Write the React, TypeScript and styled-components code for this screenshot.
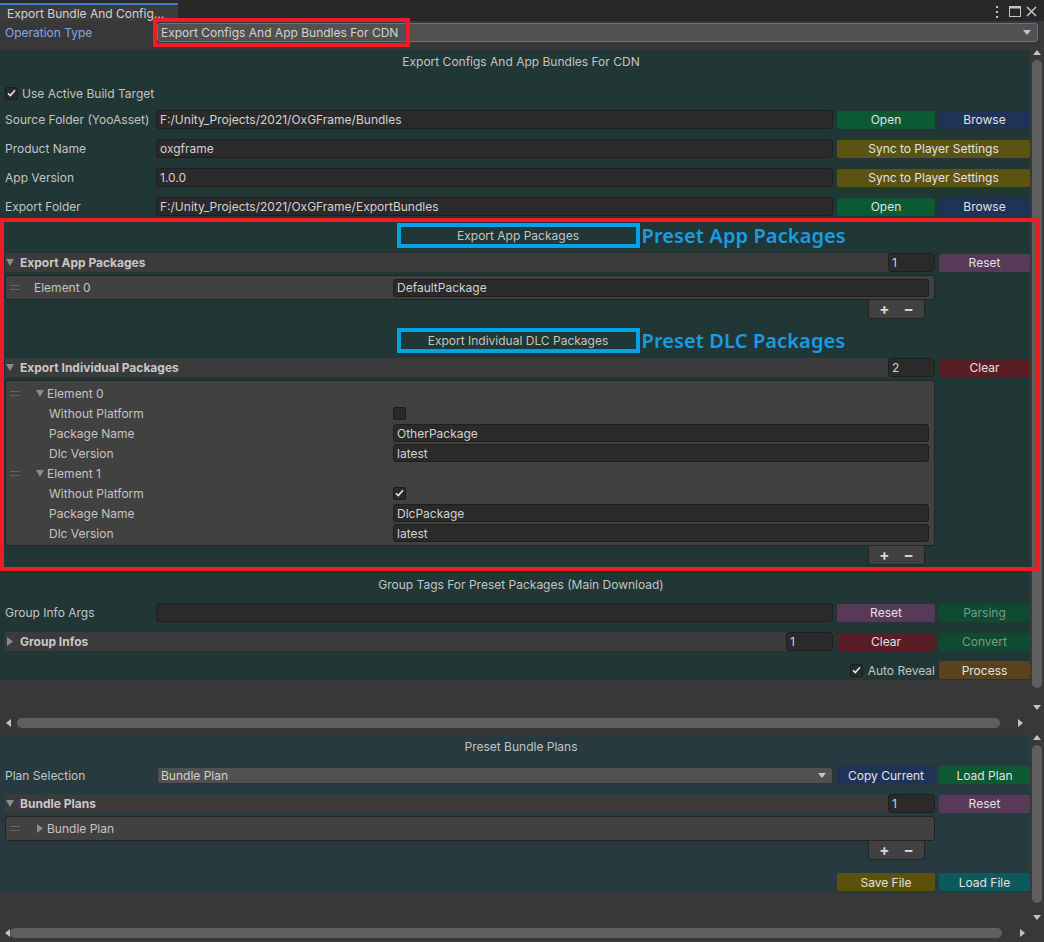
import React from "react";
import styled, { createGlobalStyle } from "styled-components";

const GlobalStyle = createGlobalStyle`
  html, body { margin: 0; padding: 0; background: #383838; }
  body { font-family: Inter, "Noto Sans", "Liberation Sans", sans-serif; font-size: 12px; color: #c4c4c4; }
  * { box-sizing: border-box; }
`;

const Window = styled.div`
  width: 1044px;
  height: 942px;
  display: flex;
  flex-direction: column;
  background: #383838;
  overflow: hidden;
`;

const TabBar = styled.div`
  height: 21px;
  flex-shrink: 0;
  background: #282828;
  display: flex;
  align-items: flex-end;
`;

const Tab = styled.div`
  width: 178px;
  height: 18px;
  background: #3c3c3c;
  border-top: 2px solid #3f7fd0;
  padding-left: 7px;
  display: flex;
  align-items: center;
  color: #d2d2d2;
  white-space: nowrap;
`;

const TabActions = styled.div`
  margin-left: auto;
  align-self: center;
  display: flex;
  align-items: center;
  padding-right: 7px;
  padding-top: 2px;
`;

const TabIcon = styled.span<{ $mr: number }>`
  display: inline-flex;
  line-height: 0;
  margin-right: ${(p) => p.$mr}px;
`;

const OpRow = styled.div`
  height: 22px;
  flex-shrink: 0;
  display: flex;
  align-items: center;
  padding: 0 6px 0 5px;
`;

const OpLabel = styled.div`
  width: 152px;
  color: #7ca8ee;
  flex-shrink: 0;
`;

const Dropdown = styled.div<{ $focus?: boolean; $h: number }>`
  position: relative;
  flex: 1;
  height: ${(p) => p.$h}px;
  background: #515151;
  border: 1px solid ${(p) => (p.$focus ? "#3b7ad0" : "#303030")};
  border-radius: 3px;
  display: flex;
  align-items: center;
  justify-content: space-between;
  padding: 0 6px 0 3px;
  color: #d2d2d2;
  white-space: nowrap;
`;

const RedMark = styled.div`
  position: absolute;
  left: -5px;
  top: -6px;
  width: 257px;
  height: 29px;
  border: 4px solid #ee1c25;
  pointer-events: none;
`;

const ScrollView = styled.div<{ $h: number }>`
  height: ${(p) => p.$h}px;
  flex-shrink: 0;
  display: flex;
  flex-direction: column;
`;

const ScrollBody = styled.div`
  flex: 1;
  display: flex;
  min-height: 0;
`;

const ScrollContent = styled.div<{ $pt: number }>`
  flex: 1;
  padding-top: ${(p) => p.$pt}px;
  display: flex;
  flex-direction: column;
`;

const VBar = styled.div<{ $thumbTop: number; $thumbBottom: number }>`
  width: 14px;
  flex-shrink: 0;
  display: flex;
  flex-direction: column;
  align-items: center;
  padding: ${(p) => p.$thumbTop}px 0 ${(p) => p.$thumbBottom}px;
  position: relative;
`;

const VThumb = styled.div`
  flex: 1;
  width: 10px;
  background: #5f5f5f;
  border-radius: 5px;
`;

const ArrowSlot = styled.div<{ $pos: "top" | "bottom" | "left" | "right"; $off: number }>`
  position: absolute;
  ${(p) => p.$pos}: ${(p) => p.$off}px;
  display: flex;
  line-height: 0;
`;

const HBar = styled.div<{ $l: number; $r: number }>`
  height: 14px;
  flex-shrink: 0;
  display: flex;
  align-items: center;
  padding: 0 ${(p) => p.$r}px 0 ${(p) => p.$l}px;
  position: relative;
`;

const HThumb = styled.div`
  flex: 1;
  height: 10px;
  background: #5f5f5f;
  border-radius: 5px;
`;

const Panel = styled.div<{ $bg: string; $pb: number }>`
  background: ${(p) => p.$bg};
  display: flex;
  flex-direction: column;
  padding-bottom: ${(p) => p.$pb}px;
`;

const SectionTitle = styled.div<{ $mt?: number }>`
  height: 22px;
  margin-top: ${(p) => p.$mt ?? 0}px;
  display: flex;
  align-items: center;
  justify-content: center;
  padding-left: 12px;
  color: #c4c4c4;
`;

const CheckRow = styled.div<{ $mt?: number }>`
  height: 18px;
  margin-top: ${(p) => p.$mt ?? 0}px;
  display: flex;
  align-items: center;
  gap: 4px;
  padding-left: 5px;
`;

const Box = styled.div`
  width: 13px;
  height: 13px;
  flex-shrink: 0;
  background: #2a2a2a;
  border: 1px solid #1c1c1c;
  border-radius: 2px;
  display: flex;
  align-items: center;
  justify-content: center;
`;

const FieldRow = styled.div<{ $mt?: number; $h?: number }>`
  height: ${(p) => p.$h ?? 19}px;
  margin-top: ${(p) => p.$mt ?? 0}px;
  display: flex;
  align-items: center;
  padding-left: 5px;
`;

const FieldLabel = styled.div<{ $w?: number }>`
  width: ${(p) => p.$w ?? 151}px;
  flex-shrink: 0;
  white-space: nowrap;
`;

const TextField = styled.div<{ $h?: number; $grow?: boolean }>`
  ${(p) => (p.$grow ? "flex: 1;" : "")}
  height: ${(p) => p.$h ?? 19}px;
  background: #2a2a2a;
  border: 1px solid #1f1f1f;
  border-radius: 3px;
  padding: 0 3px;
  display: flex;
  align-items: center;
  color: #d2d2d2;
  white-space: nowrap;
  overflow: hidden;
`;

const Btn = styled.div<{ $w: number; $bg: string; $dim?: boolean }>`
  width: ${(p) => p.$w}px;
  height: 18px;
  flex-shrink: 0;
  margin-left: 4px;
  background: ${(p) => p.$bg};
  border-radius: 2px;
  display: flex;
  align-items: center;
  justify-content: center;
  color: ${(p) => (p.$dim ? "#78998a" : "#e2e2e2")};
  white-space: nowrap;
`;

const Annotated = styled.div<{ $mt?: number }>`
  position: relative;
  margin-top: ${(p) => p.$mt ?? 0}px;
  padding: 5px 0 6px;
  display: flex;
  flex-direction: column;
`;

const RedFrame = styled.div`
  position: absolute;
  left: 0;
  top: 0;
  right: -9px;
  bottom: 0;
  border: 4px solid #ee1c25;
  pointer-events: none;
  z-index: 3;
`;

const BlueRow = styled.div<{ $mt?: number }>`
  margin-top: ${(p) => p.$mt ?? 0}px;
  display: flex;
  justify-content: center;
  padding-left: 6px;
`;

const BlueBox = styled.div`
  position: relative;
  width: 243px;
  height: 25px;
  border: 4px solid #00a2e8;
  display: flex;
  align-items: center;
  justify-content: center;
  color: #c4c4c4;
`;

const BlueNote = styled.div`
  position: absolute;
  left: calc(100% + 6px);
  top: 50%;
  transform: translateY(-52%);
  white-space: nowrap;
  color: #1a9be2;
  font-family: "Noto Sans", "Open Sans", sans-serif;
  font-weight: 600;
  font-size: 20px;
  letter-spacing: 0.1px;
`;

const HeaderRow = styled.div<{ $mt?: number }>`
  height: 19px;
  margin-top: ${(p) => p.$mt ?? 0}px;
  display: flex;
  align-items: center;
  padding-left: 5px;
`;

const HeaderBar = styled.div`
  flex: 1;
  height: 19px;
  background: #3b3b3b;
  display: flex;
  align-items: center;
  gap: 5px;
  font-weight: 700;
  color: #c8c8c8;
`;

const HeaderIcon = styled.span`
  display: inline-flex;
  width: 10px;
  justify-content: center;
  line-height: 0;
`;

const Count = styled(TextField)`
  margin-left: auto;
  width: 47px;
  font-weight: 400;
`;

const ListBox = styled.div<{ $mt?: number }>`
  margin: ${(p) => p.$mt ?? 0}px 0 0 5px;
  width: 930px;
  background: #414141;
  border: 1px solid #242424;
  border-radius: 3px;
  padding: 2px 0;
  display: flex;
  flex-direction: column;
`;

const ListRow = styled.div<{ $h: number }>`
  height: ${(p) => p.$h}px;
  display: grid;
  grid-template-columns: 387px 1fr;
  align-items: center;
  padding-right: 5px;
`;

const RowLead = styled.div<{ $pl: number }>`
  display: flex;
  align-items: center;
  padding-left: ${(p) => p.$pl}px;
  white-space: nowrap;
`;

const Handle = styled.div<{ $gap: number }>`
  width: 10px;
  height: 5px;
  border-top: 1px solid #646464;
  border-bottom: 1px solid #646464;
  margin-right: ${(p) => p.$gap}px;
`;

const Fold = styled.span`
  display: inline-flex;
  width: 8px;
  margin-right: 3px;
  justify-content: center;
`;

const FooterWrap = styled.div`
  width: 935px;
  display: flex;
  justify-content: flex-end;
  padding-right: 10px;
`;

const Footer = styled.div`
  width: 57px;
  height: 19px;
  background: #414141;
  border: 1px solid #242424;
  border-top: none;
  border-radius: 0 0 3px 3px;
  display: flex;
  align-items: center;
  justify-content: center;
  gap: 14px;
  font-size: 15px;
  font-weight: 700;
  color: #d8d8d8;
  padding-bottom: 1px;
`;

const ActionRow = styled.div<{ $mt?: number }>`
  height: 18px;
  margin-top: ${(p) => p.$mt ?? 0}px;
  display: flex;
  align-items: center;
  justify-content: flex-end;
`;

const InlineLabel = styled.span`
  margin-left: 5px;
  color: #c4c4c4;
`;

const Tri = ({ dir, c = "#c4c4c4" }: { dir: "up" | "down" | "left" | "right"; c?: string }) => {
  const d =
    dir === "up" ? "M0 5L4 0L8 5z" : dir === "down" ? "M0 0h8L4 5z" : dir === "left" ? "M5 0v8L0 4z" : "M0 0l5 4L0 8z";
  const vertical = dir === "up" || dir === "down";
  return (
    <svg width={vertical ? 8 : 5} height={vertical ? 5 : 8} viewBox={vertical ? "0 0 8 5" : "0 0 5 8"}>
      <path d={d} fill={c} />
    </svg>
  );
};

const FoldIcon = ({ open }: { open: boolean }) =>
  open ? (
    <svg width="8" height="7" viewBox="0 0 8 7">
      <path d="M0 0h8L4 7z" fill="#8c8c8c" />
    </svg>
  ) : (
    <svg width="6" height="9" viewBox="0 0 6 9">
      <path d="M0 0l6 4.5L0 9z" fill="#8c8c8c" />
    </svg>
  );

const Check = () => (
  <svg width="9" height="8" viewBox="0 0 9 8">
    <path d="M1 4.3l2.3 2.3L8 1.3" stroke="#e6e6e6" strokeWidth="1.6" fill="none" />
  </svg>
);

const CheckBox = ({ on }: { on: boolean }) => <Box>{on ? <Check /> : null}</Box>;

const Kebab = () => (
  <svg width="4" height="12" viewBox="0 0 4 12">
    <rect x="1" y="0" width="2" height="2" fill="#c4c4c4" />
    <rect x="1" y="5" width="2" height="2" fill="#c4c4c4" />
    <rect x="1" y="10" width="2" height="2" fill="#c4c4c4" />
  </svg>
);

const Maximize = () => (
  <svg width="12" height="11" viewBox="0 0 12 11">
    <rect x="0.5" y="0.5" width="11" height="10" fill="none" stroke="#c4c4c4" />
    <rect x="0.5" y="0.5" width="11" height="2" fill="#c4c4c4" />
  </svg>
);

const Close = () => (
  <svg width="11" height="11" viewBox="0 0 11 11">
    <path d="M1 1l9 9M10 1l-9 9" stroke="#c4c4c4" strokeWidth="1.5" />
  </svg>
);

const C = {
  green: "#0c5a33",
  navy: "#1f3358",
  olive: "#5b5312",
  purple: "#583958",
  red: "#591d25",
  dimGreen: "#0f4a31",
  brown: "#5a421f",
  save: "#5c510b",
  teal: "#0e595b",
};

const Field = ({ label, value, mt, children }: { label: string; value: string; mt?: number; children?: React.ReactNode }) => (
  <FieldRow $mt={mt}>
    <FieldLabel>{label}</FieldLabel>
    <TextField $grow>{value}</TextField>
    {children}
  </FieldRow>
);

const ListHeader = ({ title, count, open, mt, children }: { title: string; count: string; open: boolean; mt: number; children: React.ReactNode }) => (
  <HeaderRow $mt={mt}>
    <HeaderBar>
      <HeaderIcon>
        <FoldIcon open={open} />
      </HeaderIcon>
      <span>{title}</span>
      <Count>{count}</Count>
    </HeaderBar>
    {children}
  </HeaderRow>
);

const ElementRow = ({ gap, label, fold }: { gap: number; label: string; fold?: "open" | "closed" }) => (
  <ListRow $h={20}>
    <RowLead $pl={4}>
      <Handle $gap={gap} />
      {fold ? (
        <Fold>
          <FoldIcon open={fold === "open"} />
        </Fold>
      ) : null}
      {label}
    </RowLead>
    <div />
  </ListRow>
);

const SubRow = ({ label, children }: { label: string; children: React.ReactNode }) => (
  <ListRow $h={20}>
    <RowLead $pl={43}>{label}</RowLead>
    <div>{children}</div>
  </ListRow>
);

const PlusMinus = () => (
  <FooterWrap>
    <Footer>
      <span>+</span>
      <span>−</span>
    </Footer>
  </FooterWrap>
);

export default function App() {
  return (
    <>
      <GlobalStyle />
      <Window>
        <TabBar>
          <Tab>Export Bundle And Config...</Tab>
          <TabActions>
            <TabIcon $mr={10}>
              <Kebab />
            </TabIcon>
            <TabIcon $mr={5}>
              <Maximize />
            </TabIcon>
            <TabIcon $mr={0}>
              <Close />
            </TabIcon>
          </TabActions>
        </TabBar>

        <OpRow>
          <OpLabel>Operation Type</OpLabel>
          <Dropdown $focus $h={19}>
            <span>Export Configs And App Bundles For CDN</span>
            <Tri dir="down" />
            <RedMark />
          </Dropdown>
        </OpRow>

        <ScrollView $h={687}>
          <ScrollBody>
            <ScrollContent $pt={7}>
              <Panel $bg="#203735" $pb={1}>
                <SectionTitle>Export Configs And App Bundles For CDN</SectionTitle>
                <CheckRow $mt={12}>
                  <CheckBox on />
                  <span>Use Active Build Target</span>
                </CheckRow>
                <Field label="Source Folder (YooAsset)" value="F:/Unity_Projects/2021/OxGFrame/Bundles" mt={8}>
                  <Btn $w={98} $bg={C.green}>Open</Btn>
                  <Btn $w={91} $bg={C.navy}>Browse</Btn>
                </Field>
                <Field label="Product Name" value="oxgframe" mt={10}>
                  <Btn $w={193} $bg={C.olive}>Sync to Player Settings</Btn>
                </Field>
                <Field label="App Version" value="1.0.0" mt={10}>
                  <Btn $w={193} $bg={C.olive}>Sync to Player Settings</Btn>
                </Field>
                <Field label="Export Folder" value="F:/Unity_Projects/2021/OxGFrame/ExportBundles" mt={10}>
                  <Btn $w={98} $bg={C.green}>Open</Btn>
                  <Btn $w={91} $bg={C.navy}>Browse</Btn>
                </Field>

                <Annotated $mt={2}>
                  <RedFrame />
                  <BlueRow>
                    <BlueBox>
                      Export App Packages
                      <BlueNote>Preset App Packages</BlueNote>
                    </BlueBox>
                  </BlueRow>
                  <ListHeader title="Export App Packages" count="1" open mt={5}>
                    <Btn $w={91} $bg={C.purple}>Reset</Btn>
                  </ListHeader>
                  <ListBox $mt={3}>
                    <ListRow $h={19}>
                      <RowLead $pl={4}>
                        <Handle $gap={14} />
                        Element 0
                      </RowLead>
                      <TextField $h={18}>DefaultPackage</TextField>
                    </ListRow>
                  </ListBox>
                  <PlusMinus />

                  <BlueRow $mt={9}>
                    <BlueBox>
                      Export Individual DLC Packages
                      <BlueNote>Preset DLC Packages</BlueNote>
                    </BlueBox>
                  </BlueRow>
                  <ListHeader title="Export Individual Packages" count="2" open mt={5}>
                    <Btn $w={91} $bg={C.red}>Clear</Btn>
                  </ListHeader>
                  <ListBox $mt={3}>
                    <ElementRow gap={16} label="Element 0" fold="open" />
                    <SubRow label="Without Platform">
                      <CheckBox on={false} />
                    </SubRow>
                    <SubRow label="Package Name">
                      <TextField $h={18}>OtherPackage</TextField>
                    </SubRow>
                    <SubRow label="Dlc Version">
                      <TextField $h={18}>latest</TextField>
                    </SubRow>
                    <ElementRow gap={16} label="Element 1" fold="open" />
                    <SubRow label="Without Platform">
                      <CheckBox on />
                    </SubRow>
                    <SubRow label="Package Name">
                      <TextField $h={18}>DlcPackage</TextField>
                    </SubRow>
                    <SubRow label="Dlc Version">
                      <TextField $h={18}>latest</TextField>
                    </SubRow>
                  </ListBox>
                  <PlusMinus />
                </Annotated>

                <SectionTitle $mt={2}>Group Tags For Preset Packages (Main Download)</SectionTitle>
                <Field label="Group Info Args" value="" mt={8}>
                  <Btn $w={98} $bg={C.purple}>Reset</Btn>
                  <Btn $w={91} $bg={C.dimGreen} $dim>Parsing</Btn>
                </Field>
                <ListHeader title="Group Infos" count="1" open={false} mt={10}>
                  <Btn $w={98} $bg={C.red}>Clear</Btn>
                  <Btn $w={91} $bg={C.dimGreen} $dim>Convert</Btn>
                </ListHeader>
                <ActionRow $mt={10}>
                  <CheckBox on />
                  <InlineLabel>Auto Reveal</InlineLabel>
                  <Btn $w={91} $bg={C.brown}>Process</Btn>
                </ActionRow>
              </Panel>
            </ScrollContent>
            <VBar $thumbTop={17} $thumbBottom={28}>
              <ArrowSlot $pos="top" $off={7}>
                <Tri dir="up" />
              </ArrowSlot>
              <VThumb />
              <ArrowSlot $pos="bottom" $off={6}>
                <Tri dir="down" />
              </ArrowSlot>
            </VBar>
          </ScrollBody>
          <HBar $l={17} $r={44}>
            <ArrowSlot $pos="left" $off={6}>
              <Tri dir="left" />
            </ArrowSlot>
            <HThumb />
            <ArrowSlot $pos="right" $off={21}>
              <Tri dir="right" />
            </ArrowSlot>
          </HBar>
        </ScrollView>

        <ScrollView $h={210}>
          <ScrollBody>
            <ScrollContent $pt={5}>
              <Panel $bg="#263a40" $pb={2}>
                <SectionTitle>Preset Bundle Plans</SectionTitle>
                <FieldRow $mt={9} $h={18}>
                  <FieldLabel $w={152}>Plan Selection</FieldLabel>
                  <Dropdown $h={17}>
                    <span>Bundle Plan</span>
                    <Tri dir="down" />
                  </Dropdown>
                  <Btn $w={98} $bg={C.navy}>Copy Current</Btn>
                  <Btn $w={91} $bg={C.green}>Load Plan</Btn>
                </FieldRow>
                <ListHeader title="Bundle Plans" count="1" open mt={10}>
                  <Btn $w={91} $bg={C.purple}>Reset</Btn>
                </ListHeader>
                <ListBox $mt={3}>
                  <ListRow $h={19}>
                    <RowLead $pl={4}>
                      <Handle $gap={16} />
                      <Fold>
                        <FoldIcon open={false} />
                      </Fold>
                      Bundle Plan
                    </RowLead>
                    <div />
                  </ListRow>
                </ListBox>
                <PlusMinus />
                <ActionRow $mt={13}>
                  <Btn $w={98} $bg={C.save}>Save File</Btn>
                  <Btn $w={91} $bg={C.teal}>Load File</Btn>
                </ActionRow>
              </Panel>
            </ScrollContent>
            <VBar $thumbTop={15} $thumbBottom={23}>
              <ArrowSlot $pos="top" $off={5}>
                <Tri dir="up" />
              </ArrowSlot>
              <VThumb />
              <ArrowSlot $pos="bottom" $off={6}>
                <Tri dir="down" />
              </ArrowSlot>
            </VBar>
          </ScrollBody>
          <HBar $l={10} $r={42}>
            <ArrowSlot $pos="left" $off={5}>
              <Tri dir="left" />
            </ArrowSlot>
            <HThumb />
            <ArrowSlot $pos="right" $off={19}>
              <Tri dir="right" />
            </ArrowSlot>
          </HBar>
        </ScrollView>
      </Window>
    </>
  );
}
